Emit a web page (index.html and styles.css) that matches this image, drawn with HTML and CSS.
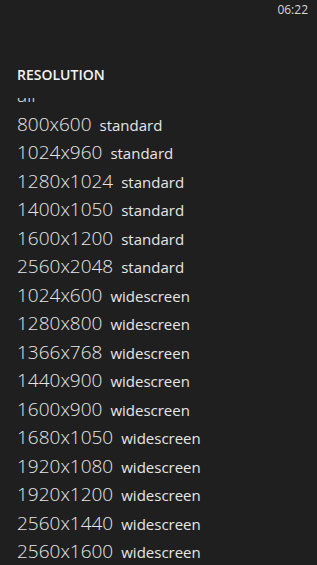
FILE: index.html
```html
<!DOCTYPE html>
<html>
<head>
    <title>Resolution</title>
    <link rel="stylesheet" href="styles.css">
</head>
<body>
    <!-- Status bar -->
    <div class="status-bar">
        <span class="clock">06:22</span>
    </div>

    <h1 class="page-title">RESOLUTION</h1>

    <!-- Picker list, scrolled a little so "all" is cut off -->
    <div class="list-viewport">
        <ul class="res-list">
            <li class="res-item"><span class="res-size">all</span></li>
            <li class="res-item"><span class="res-size">800x600</span><span class="res-kind">standard</span></li>
            <li class="res-item"><span class="res-size">1024x960</span><span class="res-kind">standard</span></li>
            <li class="res-item"><span class="res-size">1280x1024</span><span class="res-kind">standard</span></li>
            <li class="res-item"><span class="res-size">1400x1050</span><span class="res-kind">standard</span></li>
            <li class="res-item"><span class="res-size">1600x1200</span><span class="res-kind">standard</span></li>
            <li class="res-item"><span class="res-size">2560x2048</span><span class="res-kind">standard</span></li>
            <li class="res-item"><span class="res-size">1024x600</span><span class="res-kind">widescreen</span></li>
            <li class="res-item"><span class="res-size">1280x800</span><span class="res-kind">widescreen</span></li>
            <li class="res-item"><span class="res-size">1366x768</span><span class="res-kind">widescreen</span></li>
            <li class="res-item"><span class="res-size">1440x900</span><span class="res-kind">widescreen</span></li>
            <li class="res-item"><span class="res-size">1600x900</span><span class="res-kind">widescreen</span></li>
            <li class="res-item"><span class="res-size">1680x1050</span><span class="res-kind">widescreen</span></li>
            <li class="res-item"><span class="res-size">1920x1080</span><span class="res-kind">widescreen</span></li>
            <li class="res-item"><span class="res-size">1920x1200</span><span class="res-kind">widescreen</span></li>
            <li class="res-item"><span class="res-size">2560x1440</span><span class="res-kind">widescreen</span></li>
            <li class="res-item"><span class="res-size">2560x1600</span><span class="res-kind">widescreen</span></li>
        </ul>
    </div>
</body>
</html>
```

FILE: styles.css
```css
html, body {
    height: 100%;
}
body {
    margin: 0;
    background-color: #1f1f1f;
    color: #e6e6e6;
    font-family: "Open Sans", "Noto Sans", sans-serif;
    display: flex;
    flex-direction: column;
    overflow: hidden;
}
.status-bar {
    display: flex;
    justify-content: flex-end;
    height: 22px;
    padding: 0 9px;
    font-size: 12px;
    line-height: 20px;
    color: #d8d8d8;
}
.page-title {
    margin: 0;
    padding: 43px 0 0 17px;
    font-size: 14px;
    font-weight: 600;
    line-height: 20px;
    color: #f2f2f2;
}
.list-viewport {
    flex: 1;
    overflow: hidden;
    margin-top: 13px;
}
.res-list {
    list-style: none;
    margin: -17px 0 0 0;
    padding: 0 0 0 17px;
}
.res-item {
    display: flex;
    align-items: baseline;
    gap: 8px;
    height: 28.5px;
    line-height: 28.5px;
}
.res-size {
    font-size: 19px;
    font-weight: 300;
}
.res-kind {
    font-size: 15px;
    font-weight: 500;
}
```
